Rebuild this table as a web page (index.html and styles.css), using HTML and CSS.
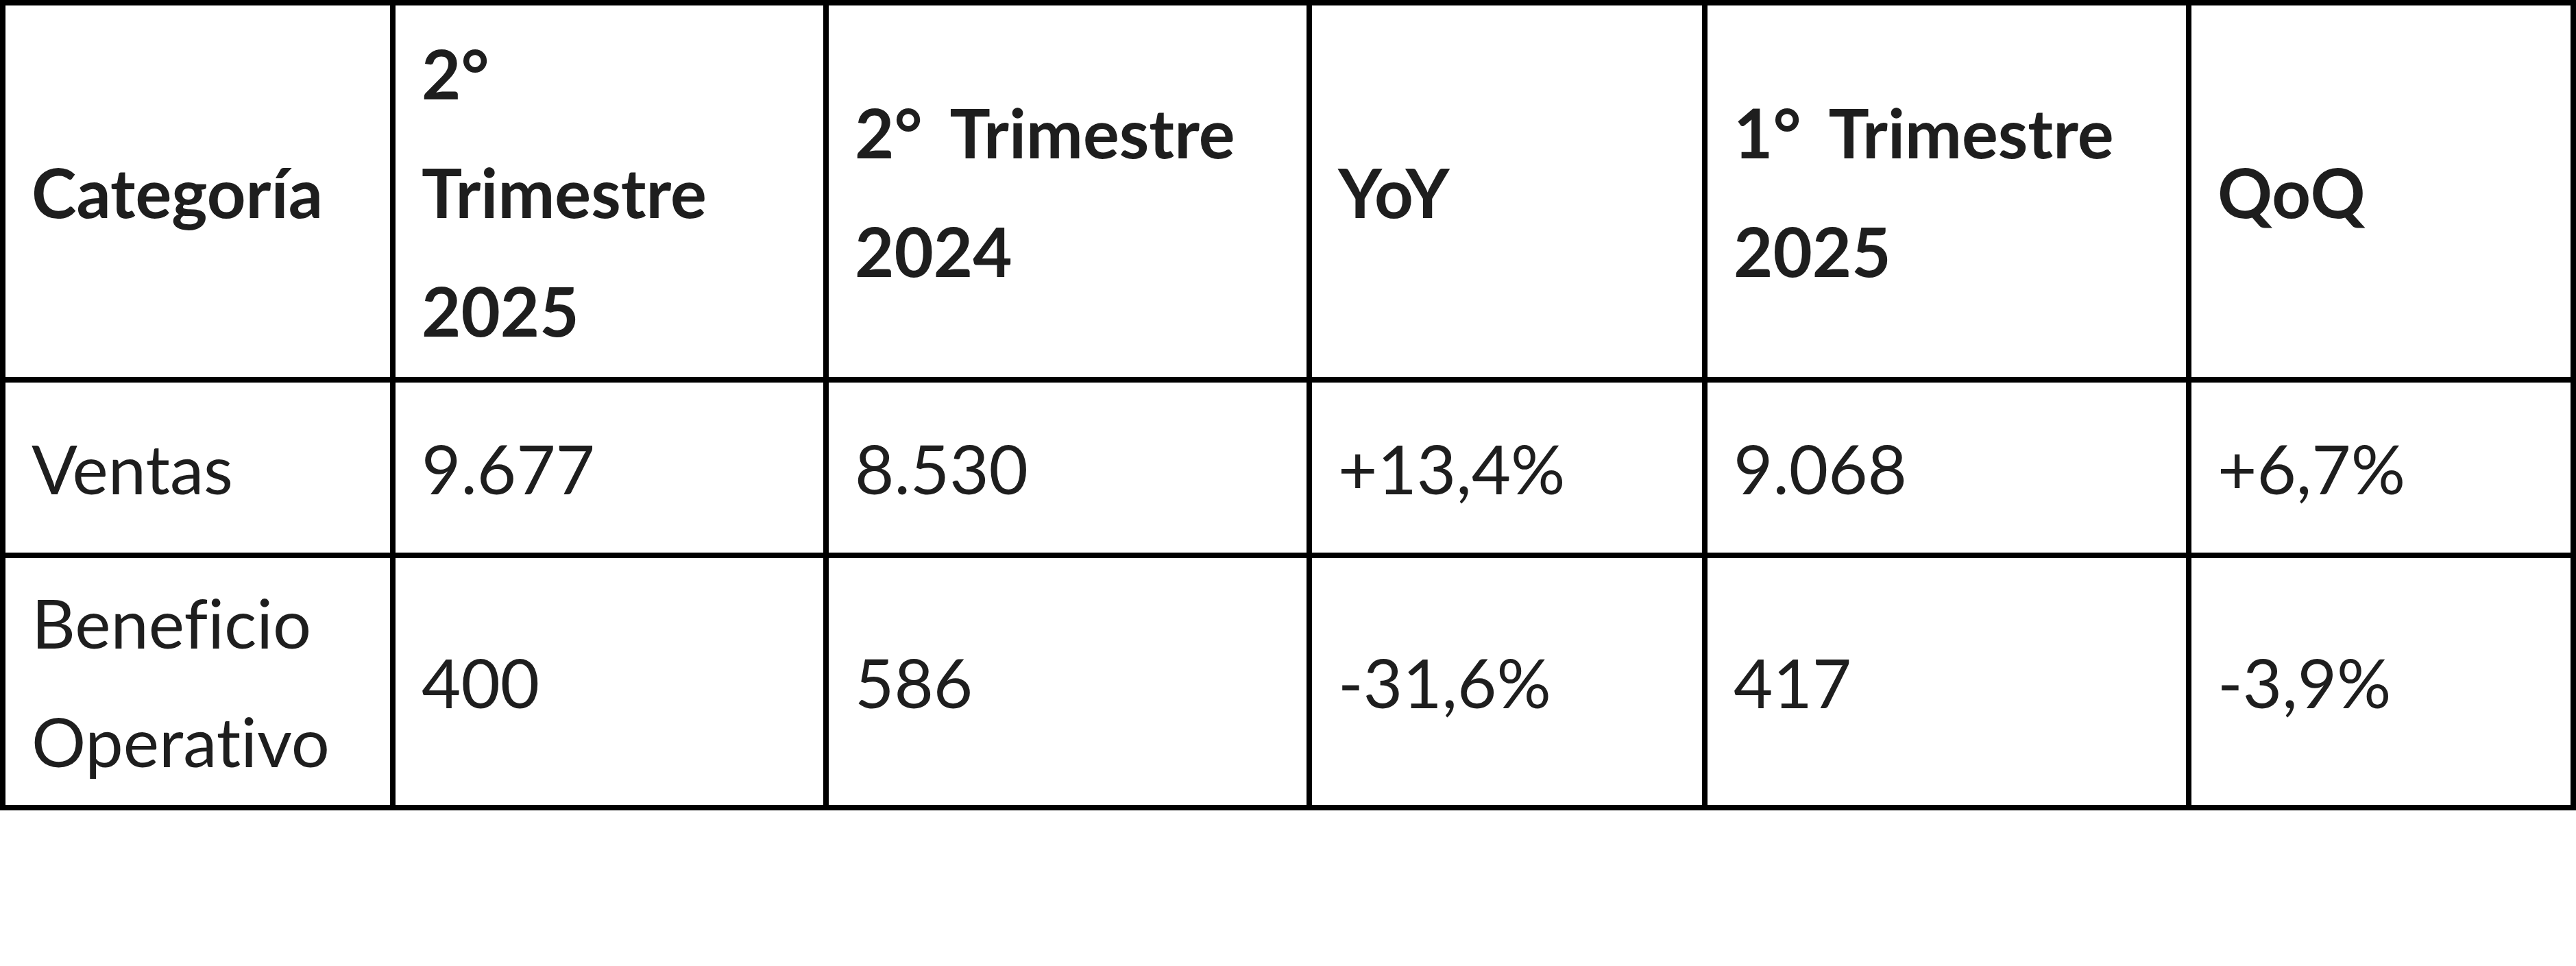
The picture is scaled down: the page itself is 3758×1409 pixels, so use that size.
FILE: index.html
```html
<!DOCTYPE html>
<html lang="es">
<head>
<meta charset="utf-8">
<title>Resultados trimestrales</title>
<link rel="stylesheet" href="styles.css">
</head>
<body>
<table class="data">
  <colgroup>
    <col class="c1"><col class="c2"><col class="c3"><col class="c4"><col class="c5"><col class="c6">
  </colgroup>
  <thead>
    <tr class="head">
      <th>Categoría</th>
      <th>2°<br>Trimestre<br>2025</th>
      <th>2° Trimestre 2024</th>
      <th>YoY</th>
      <th>1° Trimestre 2025</th>
      <th>QoQ</th>
    </tr>
  </thead>
  <tbody>
    <tr class="r1">
      <td>Ventas</td>
      <td>9.677</td>
      <td>8.530</td>
      <td>+13,4%</td>
      <td>9.068</td>
      <td>+6,7%</td>
    </tr>
    <tr class="r2">
      <td>Beneficio Operativo</td>
      <td>400</td>
      <td>586</td>
      <td>-31,6%</td>
      <td>417</td>
      <td>-3,9%</td>
    </tr>
  </tbody>
</table>
</body>
</html>
```
FILE: styles.css
```css
html, body {
  margin: 0;
  padding: 0;
  background: #ffffff;
}

body {
  font-family: Lato, "Open Sans", "Noto Sans", sans-serif;
  color: #1e1e1e;
}

.data {
  width: 3758px;
  border-collapse: collapse;
  table-layout: fixed;
  font-size: 99px;
  line-height: 173px;
  font-variant-ligatures: none;
  font-feature-settings: "liga" 0, "clig" 0;
}

.c1 { width: 15.173%; }
.c2 { width: 16.853%; }
.c3 { width: 18.8%; }
.c4 { width: 15.387%; }
.c5 { width: 18.827%; }
.c6 { width: 14.96%; }

.data th,
.data td {
  border: 8px solid #000;
  text-align: left;
  vertical-align: middle;
  padding-left: 38px;
  padding-right: 38px;
}

.data th {
  font-weight: 700;
  word-spacing: 19px;
  padding-top: 11.5px;
  padding-bottom: 11.5px;
}

.data td {
  font-weight: 400;
}

.r1 td {
  padding-top: 37.5px;
  padding-bottom: 37.5px;
}

.r2 td {
  padding-top: 7px;
  padding-bottom: 7px;
}
```
